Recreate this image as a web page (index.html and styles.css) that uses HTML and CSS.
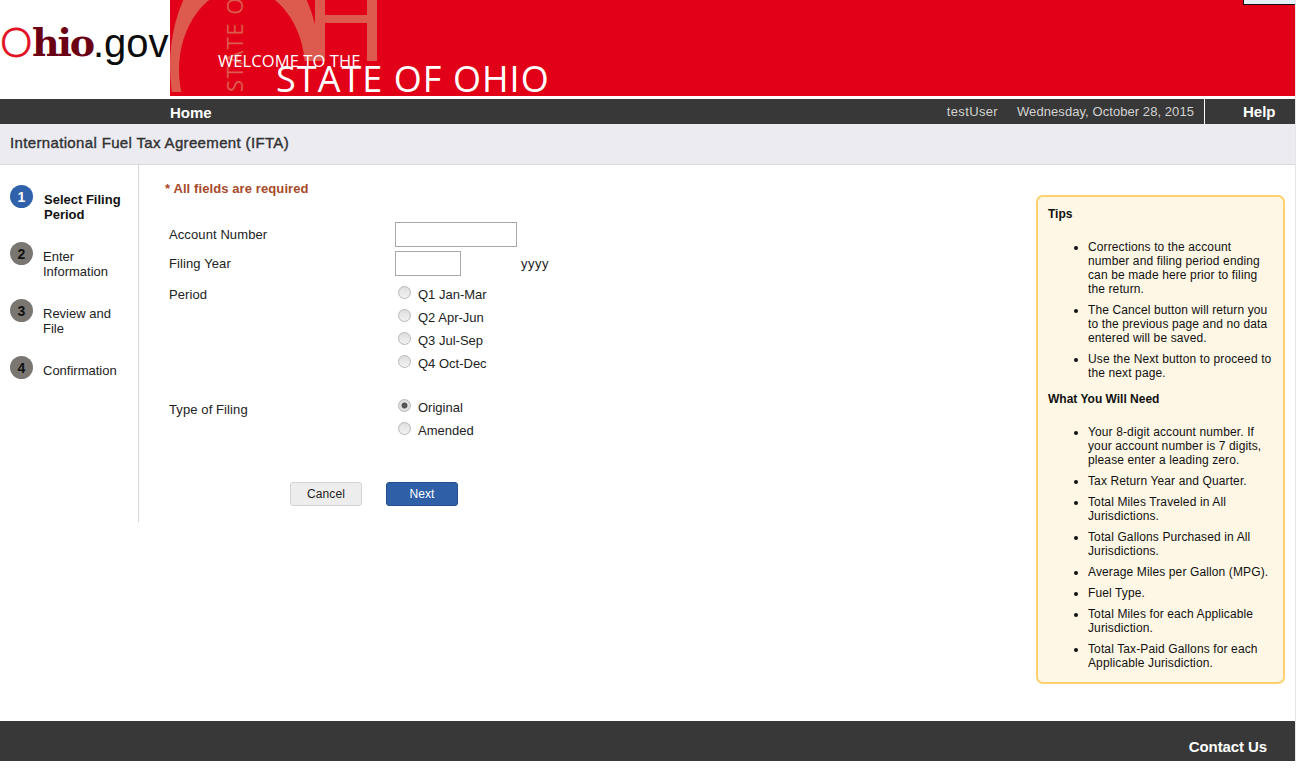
FILE: index.html
```html
<!DOCTYPE html>
<html lang="en">
<head>
<meta charset="utf-8">
<title>International Fuel Tax Agreement (IFTA)</title>
<link rel="stylesheet" href="styles.css">
</head>
<body>
<div class="page">
  <div class="corner-widget"></div>
  <header class="masthead">
    <svg class="logo" width="170" height="96" viewBox="0 0 170 96" role="img" aria-label="Ohio.gov">
      <text y="56"><tspan x="0" y="57" class="logo-o">O</tspan><tspan x="32" y="56" class="logo-hio">hio</tspan><tspan x="93" y="57" class="logo-gov">.gov</tspan></text>
    </svg>
    <svg class="banner" width="1125" height="96" viewBox="0 0 1125 96" role="img" aria-label="Welcome to the State of Ohio">
      <defs><clipPath id="art"><rect x="0" y="0" width="220" height="92"/></clipPath>
      <clipPath id="art-o"><rect x="0" y="0" width="160" height="61"/><rect x="0" y="0" width="70" height="92"/></clipPath></defs>
      <rect width="1125" height="96" fill="#e10017"/>
      <g clip-path="url(#art-o)">
        <ellipse cx="75" cy="66" rx="75" ry="116" fill="#dd5a4e"/>
        <ellipse cx="72" cy="70" rx="63" ry="82" fill="#e10017"/>
      </g>
      <g clip-path="url(#art)" fill="#dd5a4e">
        <rect x="145" y="0" width="10" height="61"/>
        <rect x="150" y="15" width="50" height="8"/>
        <rect x="197" y="0" width="10" height="61"/>
        <text class="art-text" transform="translate(73 92) rotate(-90)">STATE OH</text>
      </g>
      <text class="welcome" x="48" y="67">WELCOME TO THE</text>
      <text class="state" x="106" y="92">STATE OF OHIO</text>
    </svg>
  </header>

  <nav class="topnav">
    <a class="nav-home">Home</a>
    <span class="nav-user">testUser</span>
    <span class="nav-date">Wednesday, October 28, 2015</span>
    <a class="nav-help">Help</a>
  </nav>

  <h1 class="title-bar">International Fuel Tax Agreement (IFTA)</h1>

  <main class="content">
    <ol class="steps">
      <li class="step step-active"><span class="step-num">1</span><span class="step-text">Select Filing Period</span></li>
      <li class="step"><span class="step-num">2</span><span class="step-text">Enter Information</span></li>
      <li class="step"><span class="step-num">3</span><span class="step-text">Review and File</span></li>
      <li class="step"><span class="step-num">4</span><span class="step-text">Confirmation</span></li>
    </ol>

    <form class="filing-form">
      <p class="required">* All fields are required</p>
      <div class="field field-account">
        <label class="field-label">Account Number</label>
        <input class="text-input input-account" type="text">
      </div>
      <div class="field field-year">
        <label class="field-label">Filing Year</label>
        <input class="text-input input-year" type="text">
        <span class="hint">yyyy</span>
      </div>
      <div class="field field-radio field-period">
        <span class="field-label">Period</span>
        <div class="radio-group">
          <label class="radio"><input type="radio" name="period"><span>Q1 Jan-Mar</span></label>
          <label class="radio"><input type="radio" name="period"><span>Q2 Apr-Jun</span></label>
          <label class="radio"><input type="radio" name="period"><span>Q3 Jul-Sep</span></label>
          <label class="radio"><input type="radio" name="period"><span>Q4 Oct-Dec</span></label>
        </div>
      </div>
      <div class="field field-radio field-type">
        <span class="field-label">Type of Filing</span>
        <div class="radio-group">
          <label class="radio"><input type="radio" name="type" checked><span>Original</span></label>
          <label class="radio"><input type="radio" name="type"><span>Amended</span></label>
        </div>
      </div>
      <div class="actions">
        <button class="btn btn-cancel" type="button">Cancel</button>
        <button class="btn btn-next" type="button">Next</button>
      </div>
    </form>

    <aside class="tips">
      <h2 class="tips-head">Tips</h2>
      <ul class="tips-list">
        <li>Corrections to the account number and filing period ending can be made here prior to filing the return.</li>
        <li>The Cancel button will return you to the previous page and no data entered will be saved.</li>
        <li>Use the Next button to proceed to the next page.</li>
      </ul>
      <h2 class="tips-head tips-need">What You Will Need</h2>
      <ul class="tips-list">
        <li>Your 8-digit account number. If your account number is 7 digits, please enter a leading zero.</li>
        <li>Tax Return Year and Quarter.</li>
        <li>Total Miles Traveled in All Jurisdictions.</li>
        <li>Total Gallons Purchased in All Jurisdictions.</li>
        <li>Average Miles per Gallon (MPG).</li>
        <li>Fuel Type.</li>
        <li>Total Miles for each Applicable Jurisdiction.</li>
        <li>Total Tax-Paid Gallons for each Applicable Jurisdiction.</li>
      </ul>
    </aside>
  </main>

  <footer class="footer"><a class="footer-link">Contact Us</a></footer>
</div>
</body>
</html>
```
FILE: styles.css
```css
* { box-sizing: border-box; }
html, body { margin: 0; padding: 0; background: #fff; }
body { font-family: "Liberation Sans", Arial, sans-serif; font-size: 13px; color: #1a1a1a; overflow: hidden; }
.page { position: relative; width: 1296px; border-right: 1px solid #e6e6e6; }

.corner-widget { position: absolute; top: -2px; right: 0; width: 52px; height: 7px; background: #e4f1f8; border: 1px solid #111; border-right: 0; }

.masthead { display: flex; height: 99px; align-items: flex-start; }
.logo { display: block; flex: none; }
.logo-o { font-family: "Lato", sans-serif; font-size: 41px; font-weight: 300; fill: #e2101f; stroke: #e2101f; stroke-width: 0.8px; }
.logo-hio { font-family: "DejaVu Serif", serif; font-size: 38px; font-weight: 700; letter-spacing: -2.2px; fill: #6b0015; }
.logo-gov { font-family: "Liberation Sans", sans-serif; font-size: 40px; font-weight: 400; fill: #0c0c0c; }
.banner { display: block; flex: none; }
.art-text { font-family: "Open Sans", sans-serif; font-size: 22px; letter-spacing: 1.5px; }
.welcome { font-family: "Open Sans", sans-serif; font-weight: 400; font-size: 16.5px; letter-spacing: 0.1px; fill: #fff; }
.state { font-family: "Open Sans", sans-serif; font-weight: 400; font-size: 36px; letter-spacing: 1.05px; fill: #fff; }

.topnav { display: flex; align-items: center; height: 25px; background: #383838; color: #fff; padding-left: 170px; }
.nav-home { font-size: 15px; font-weight: 700; padding-top: 1px; }
.nav-user { margin-left: auto; color: #d2d2d2; font-size: 13px; letter-spacing: 0.35px; }
.nav-date { margin-left: 19px; color: #d2d2d2; font-size: 13px; width: 187px; letter-spacing: 0.07px; }
.nav-help { display: block; width: 91px; height: 25px; border-left: 1px solid #fff; font-size: 15px; font-weight: 700; padding: 4px 0 0 38px; }

.title-bar { margin: 0; height: 41px; background: #ecebf2; border-bottom: 1px solid #d8d8d8; font-size: 15px; font-weight: 400; -webkit-text-stroke: 0.4px #333; color: #333; padding: 11px 0 0 10px; line-height: 16px; letter-spacing: 0.35px; }

.content { display: flex; align-items: flex-start; padding-bottom: 37px; }

.steps { list-style: none; margin: 0; padding: 20px 0 0 10px; width: 139px; height: 357px; flex: none; border-right: 1px solid #d8d8d8; }
.step { display: flex; height: 57px; align-items: flex-start; }
.step-num { flex: none; width: 23px; height: 23px; border-radius: 50%; background: #7a7672; color: #111; font-weight: 700; font-size: 14px; line-height: 25px; text-align: center; }
.step-text { margin: 7px 0 0 10px; line-height: 15px; width: 80px; color: #222; }
.step-active .step-num { background: #2f62ab; color: #fff; }
.step-active .step-text { font-weight: 700; color: #111; margin-left: 11px; width: 85px; }

.filing-form { flex: none; width: 897px; padding: 16px 0 0 26px; }
.required { margin: 0 0 25px; font-weight: 700; color: #a84a2a; line-height: 16px; letter-spacing: 0.1px; }
.field { display: flex; padding-left: 4px; }
.field-label { flex: none; width: 226px; letter-spacing: 0.1px; color: #222; }
.field-account, .field-year { align-items: center; height: 25px; margin-bottom: 4px; }
.text-input { display: block; height: 25px; border: 1px solid #a9a9a9; background: #fff; padding: 0; border-radius: 0; }
.input-account { width: 122px; }
.input-year { width: 66px; }
.hint { margin-left: 60px; letter-spacing: 0.5px; }
.field-period { margin-top: 7px; }
.field-type { margin-top: 21px; }
.field-radio .field-label { line-height: 23px; }
.field-type .field-label { padding-top: 2px; }
.radio { display: flex; align-items: center; height: 23px; color: #222; }
.radio input { appearance: none; -webkit-appearance: none; flex: none; width: 13px; height: 13px; margin: -5px 7px 0 3px; border: 1px solid #b8b8b8; border-radius: 50%; background: linear-gradient(#dedede, #f2f2f2); }
.radio input:checked { background: radial-gradient(circle, #555 0 2.6px, #e0e0e0 3.4px); }

.actions { display: flex; gap: 24px; margin: 40px 0 0 125px; }
.btn { width: 72px; height: 24px; border-radius: 3px; font-family: inherit; font-size: 12px; padding: 0; letter-spacing: 0.1px; }
.btn-cancel { background: #ededed; border: 1px solid #d4d4d4; color: #222; }
.btn-next { background: #2f5fa7; border: 1px solid #264f8d; color: #fff; }

.tips { flex: none; width: 249px; margin-top: 30px; background: #fef7e5; border: 2px solid #ffd070; border-radius: 7px; padding: 10px 10px 5px; font-size: 12px; line-height: 14px; color: #111; }
.tips-head { margin: 0; font-size: 12px; font-weight: 700; line-height: 14px; }
.tips-list { margin: 19px 0 0; padding: 0 0 0 40px; letter-spacing: 0.12px; }
.tips-list li { margin-bottom: 7px; }
.tips-need { margin-top: 12px; }

.footer { display: flex; justify-content: flex-end; height: 40px; background: #383838; padding: 17px 28px 0 0; }
.footer-link { color: #fff; font-size: 15px; font-weight: 700; line-height: 17px; letter-spacing: -0.1px; }
```
